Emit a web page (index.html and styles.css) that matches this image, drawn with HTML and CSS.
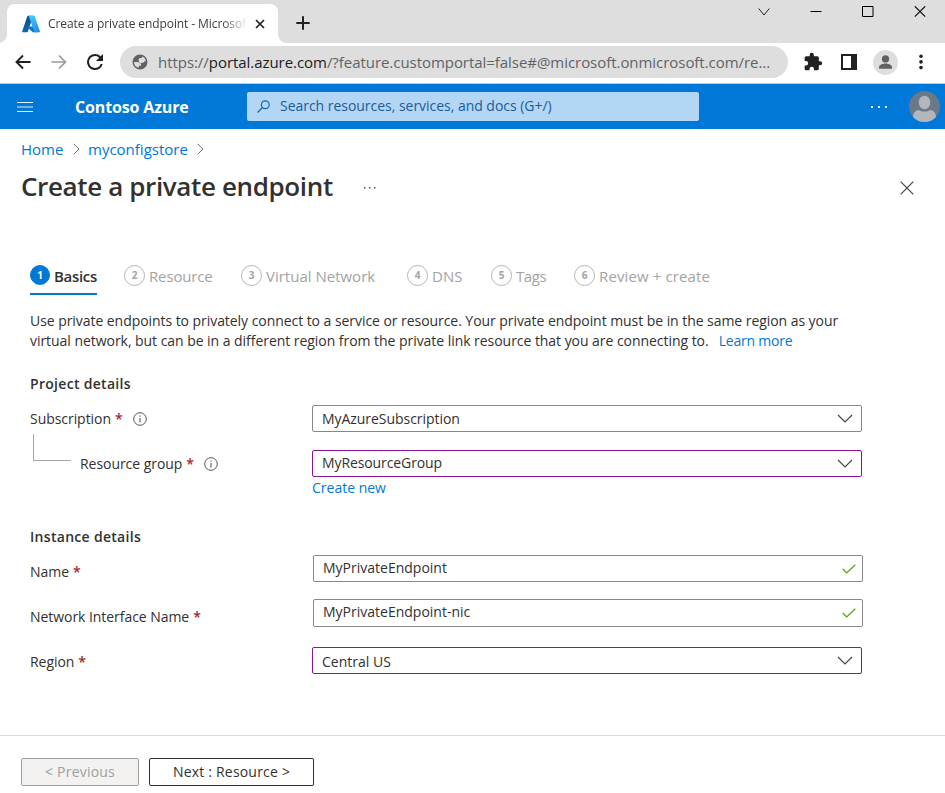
FILE: index.html
```html
<!DOCTYPE html>
<html lang="en">
<head>
<meta charset="utf-8">
<title>Create a private endpoint - Microsoft Azure</title>
<link rel="stylesheet" href="styles.css">
</head>
<body>
<div class="tabstrip">
  <div class="tab">
    <svg class="logo" width="18" height="18" viewBox="0 0 18 18"><defs><linearGradient id="g1" x1="0.7" y1="0" x2="0.3" y2="1"><stop offset="0" stop-color="#114a8b"/><stop offset="1" stop-color="#0669bc"/></linearGradient><linearGradient id="g2" x1="0.3" y1="0" x2="0.7" y2="1"><stop offset="0" stop-color="#3ccbf4"/><stop offset="1" stop-color="#2892df"/></linearGradient></defs><path fill="url(#g1)" d="M6 .8h5.2L5.9 16.6a.9.9 0 0 1-.8.6H1.1a.8.8 0 0 1-.8-1.1L5.200 1.400A.9.9 0 0 1 6 .8z"/><path fill="#0078d4" d="M13.700 11.400H5.500a.4.400 0 0 0-.3.7l5.300 4.900a.8.8 0 0 0 .6.200h4.600z"/><path fill="url(#g2)" d="M12.800 1.400a.8.8 0 0 0-.8-.6H6.100a.8.8 0 0 1 .8.600l5 14.700a.8.8 0 0 1-.8 1.100H17a.8.8 0 0 0 .8-1.100z"/></svg>
    <span class="tab-title">Create a private endpoint - Microsof</span>
    <svg class="tab-close" width="10" height="10" viewBox="0 0 10 10"><path d="M1 1l8 8M9 1L1 9" stroke="#202124" stroke-width="1.700"/></svg>
  </div>
  <svg class="plus" width="14" height="14" viewBox="0 0 14 14"><path d="M7 .3v13.400M.3 7h13.400" stroke="#202124" stroke-width="2"/></svg>
  <div class="window-buttons">
    <svg width="12" height="12" viewBox="0 0 12 12"><path d="M.7 2.500L6 9l5.300-6.500" fill="none" stroke="#222"/></svg>
    <svg width="12" height="12" viewBox="0 0 12 12"><path d="M.5 5.500h11" stroke="#000"/></svg>
    <svg width="12" height="12" viewBox="0 0 12 12"><path d="M.5 .5h10.500V10.500H.5z" fill="none" stroke="#000"/></svg>
    <svg width="12" height="12" viewBox="0 0 12 12"><path d="M.8.3l10.400 10.400M11.200.3L.8 10.700" stroke="#000" stroke-width="1.100"/></svg>
  </div>
</div>
<div class="toolbar">
  <svg class="back" width="16" height="16" viewBox="0 0 16 16"><path d="M15.500 8H2M8 1.500L1.500 8 8 14.500" fill="none" stroke="#202124" stroke-width="1.900"/></svg>
  <svg class="forward" width="16" height="16" viewBox="0 0 16 16"><path d="M.5 8H14M8 1.500L14.500 8 8 14.500" fill="none" stroke="#9b9b9b" stroke-width="1.700"/></svg>
  <svg class="reload" width="24" height="24" viewBox="0 0 24 24"><path fill="#202124" d="M17.650 6.350A7.950 7.950 0 0 0 12 4a8 8 0 1 0 7.730 10h-2.080A6 6 0 1 1 12 6c1.660 0 3.140.690 4.220 1.780L13 11h7V4z"/></svg>
  <div class="omnibox">
    <svg width="18" height="18" viewBox="0 0 24 24"><path fill="#5f6368" d="M12 2a10 10 0 1 0 0 20 10 10 0 0 0 0-20zM4 12h4.500c3.400 0 5.100 1.700 5 5h-3.100v2.800A8 8 0 0 1 4 12zm15.900-.9h-2.100c-.4 1.500-1.600 2.300-3.400 2.300h-4.100V9.600c0-1.600.5-2.500 1.600-2.800h2.700V4.600a8 8 0 0 1 5.300 6.500z"/></svg>
    <span class="url">https://<b>portal.azure.com</b>/?feature.customportal=false#@microsoft.onmicrosoft.com/re...</span>
  </div>
  <svg class="puzzle" width="20" height="20" viewBox="0 0 24 24"><path fill="#202124" d="M20.500 11H19V7a2 2 0 0 0-2-2h-4V3.500a2.500 2.500 0 0 0-5 0V5H4a2 2 0 0 0-2 2v3.800h1.500a2.700 2.700 0 0 1 0 5.400H2V20c0 1.100.9 2 2 2h3.800v-1.500a2.700 2.700 0 0 1 5.400 0V22H17a2 2 0 0 0 2-2v-4h1.500a2.500 2.500 0 0 0 0-5z"/></svg>
  <svg class="panel" width="16" height="16" viewBox="0 0 16 16"><path fill="#202124" d="M0 0h16v16H0zM2 2v12h8V2z" fill-rule="evenodd"/></svg>
  <svg class="person" width="25" height="25" viewBox="0 0 25 25"><circle cx="12.500" cy="12.500" r="12.500" fill="#dedede"/><circle cx="12.500" cy="8.900" r="3.600" fill="#616161"/><path d="M6 18.700v-1.500c0-2.600 4.300-3.700 6.500-3.700s6.500 1.100 6.500 3.700v1.500z" fill="#616161"/></svg>
  <svg class="kebab" width="4" height="16" viewBox="0 0 4 16"><g fill="#202124"><circle cx="2" cy="2.200" r="1.800"/><circle cx="2" cy="7.900" r="1.800"/><circle cx="2" cy="13.600" r="1.800"/></g></svg>
</div>
<header class="portal-bar">
  <svg class="burger" width="16" height="12" viewBox="0 0 16 12"><path d="M0 1.500h16M0 10.500h16" stroke="#e6f2fb"/><path d="M0 6h16" stroke="#6fb2e8" stroke-width="2"/></svg>
  <span class="brand">Contoso Azure</span>
  <div class="search">
    <svg width="13" height="13" viewBox="0 0 13 13"><circle cx="8.300" cy="4.700" r="3.900" fill="none" stroke="#1a64ad" stroke-width="1.200"/><path d="M5.500 7.500L.5 12.500" stroke="#1a64ad" stroke-width="1.200"/></svg>
    <span class="search-text">Search resources, services, and docs (G+/)</span>
  </div>
  <svg class="bar-dots" width="16" height="2" viewBox="0 0 16 2"><path d="M0 0h2v2H0zM7 0h2v2H7zM14 0h2v2h-2z" fill="#fff"/></svg>
  <svg class="avatar" width="31" height="31" viewBox="0 0 31 31"><defs><clipPath id="av"><circle cx="15.500" cy="15.500" r="15.500"/></clipPath></defs><g clip-path="url(#av)"><path fill="#6b7887" d="M0 0h31v31H0z"/><path fill="#b2b7bb" d="M4 31v-5c0-4 2.500-7 6-7 1.500 1 3 1.500 5.500 1.500s4-.5 5.500-1.500c3.500 0 6 3 6 7v5z"/><ellipse cx="15.500" cy="11.500" rx="6.300" ry="7.200" fill="#b2b7bb" stroke="#6b7887"/></g></svg>
</header>
<main>
  <nav class="crumbs"><a class="c-home">Home</a><svg width="7" height="12" viewBox="0 0 7 12"><path d="M.8.800L6 6 .8 11.200" fill="none" stroke="#777"/></svg><a class="c-store">myconfigstore</a><svg width="7" height="12" viewBox="0 0 7 12"><path d="M.8.800L6 6 .8 11.200" fill="none" stroke="#777"/></svg></nav>
  <div class="title-row">
    <h1>Create a private endpoint</h1>
    <svg class="more" width="12" height="2" viewBox="0 0 12 2"><path d="M0 0h1.500v1.500H0zM5 0h1.500v1.500H5zM10 0h1.500v1.500H10z" fill="#555"/></svg>
    <svg class="close" width="14" height="14" viewBox="0 0 14 14"><path d="M.7.700l12.600 12.600M13.300.700L.7 13.300" stroke="#444" stroke-width="1.200"/></svg>
  </div>
  <div class="steps">
    <div class="step active"><i>1</i><span class="s1">Basics</span></div>
    <div class="step"><i>2</i><span class="s2">Resource</span></div>
    <div class="step"><i>3</i><span class="s3">Virtual Network</span></div>
    <div class="step"><i>4</i><span class="s4">DNS</span></div>
    <div class="step"><i>5</i><span class="s5">Tags</span></div>
    <div class="step"><i>6</i><span class="s6">Review + create</span></div>
  </div>
  <p class="intro"><span class="line1">Use private endpoints to privately connect to a service or resource. Your private endpoint must be in the same region as your</span><br><span class="line2">virtual network, but can be in a different region from the private link resource that you are connecting to.</span><a class="learn">Learn more</a></p>
  <h2 class="h-project">Project details</h2>
  <div class="row r-sub">
    <label><span class="l-sub">Subscription</span><em>*</em><svg class="info" width="14" height="14" viewBox="0 0 14 14"><circle cx="7" cy="7" r="6.300" fill="none" stroke="#555" stroke-width="1"/><path d="M7 6v4.500M7 3.500v1.300" stroke="#555" stroke-width="1.100"/></svg></label>
    <div class="field"><span class="v-sub">MyAzureSubscription</span><svg width="16" height="9" viewBox="0 0 16 9"><path d="M1 1l7 7 7-7" fill="none" stroke="#444" stroke-width="1.200"/></svg></div>
  </div>
  <div class="row r-group">
    <label><span class="elbow"></span><span class="l-group">Resource group</span><em>*</em><svg class="info" width="14" height="14" viewBox="0 0 14 14"><circle cx="7" cy="7" r="6.300" fill="none" stroke="#555" stroke-width="1"/><path d="M7 6v4.500M7 3.500v1.300" stroke="#555" stroke-width="1.100"/></svg></label>
    <div class="field changed"><span class="v-group">MyResourceGroup</span><svg width="16" height="9" viewBox="0 0 16 9"><path d="M1 1l7 7 7-7" fill="none" stroke="#444" stroke-width="1.200"/></svg></div>
  </div>
  <a class="create">Create new</a>
  <h2 class="h-instance">Instance details</h2>
  <div class="row r-name">
    <label><span class="l-name">Name</span><em>*</em></label>
    <div class="field input"><span class="v-name">MyPrivateEndpoint</span><svg width="14" height="10" viewBox="0 0 14 10"><path d="M.7 5l4 4L13.300.7" fill="none" stroke="#57a300" stroke-width="1.200"/></svg></div>
  </div>
  <div class="row r-nic">
    <label><span class="l-nic">Network Interface Name</span><em>*</em></label>
    <div class="field input"><span class="v-nic">MyPrivateEndpoint-nic</span><svg width="14" height="10" viewBox="0 0 14 10"><path d="M.7 5l4 4L13.300.7" fill="none" stroke="#57a300" stroke-width="1.200"/></svg></div>
  </div>
  <div class="row r-region">
    <label><span class="l-region">Region</span><em>*</em></label>
    <div class="field changed"><span class="v-region">Central US</span><svg width="16" height="9" viewBox="0 0 16 9"><path d="M1 1l7 7 7-7" fill="none" stroke="#444" stroke-width="1.200"/></svg></div>
  </div>
</main>
<footer>
  <button class="prev" disabled><span>&lt; Previous</span></button>
  <button class="next"><span>Next : Resource &gt;</span></button>
</footer>
</body>
</html>
```
FILE: styles.css
```css
* { box-sizing: border-box; }
html, body { margin: 0; height: 100%; }
body {
  display: flex; flex-direction: column; overflow: hidden; background: #fff;
  font-family: "Open Sans", "Noto Sans", sans-serif; font-size: 14px; color: #323130;
}
svg { display: block; flex: none; }
span, a, h1, h2 { white-space: nowrap; }
a { color: #0078d4; }

.tabstrip { height: 43px; flex: none; background: #dedede; display: flex; align-items: flex-start; }
.tab {
  position: relative; margin: 4px 0 0 7px; width: 271px; height: 39px; background: #fff;
  border-radius: 8px 8px 0 0; display: flex; align-items: center; padding-left: 15px;
}
.tab::before, .tab::after { content: ""; position: absolute; bottom: 0; width: 8px; height: 8px; }
.tab::before { left: -8px; background: radial-gradient(circle at 0 0, transparent 7.5px, #fff 8px); }
.tab::after { right: -8px; background: radial-gradient(circle at 100% 0, transparent 7.5px, #fff 8px); }
.tab-title {
  margin-left: 8px; width: 198px; font-size: 12px; letter-spacing: -0.09px; color: #3c3c3c;
  -webkit-mask-image: linear-gradient(90deg, #000 174px, transparent 200px);
  mask-image: linear-gradient(90deg, #000 174px, transparent 200px);
}
.tab-close { margin-left: 9px; }
.plus { margin: 16px 0 0 18px; }
.window-buttons { margin: 6px 19px 0 auto; display: flex; gap: 40px; }

.toolbar { height: 41px; flex: none; display: flex; align-items: center; padding: 0 20px 2px 15px; border-bottom: 1px solid #c4ccd3; }
.forward { margin-left: 20px; }
.reload { margin-left: 16px; width: 24px; }
.omnibox { margin-left: 13px; width: 668px; height: 32px; border-radius: 16px; background: #dedede; display: flex; align-items: center; padding-left: 11px; }
.url { margin-left: 9px; font-size: 15px; letter-spacing: -0.048px; color: #5f6368; }
.url b { font-weight: 400; color: #202124; }
.puzzle { margin-left: 15px; }
.panel { margin-left: 18px; }
.person { margin-left: 16px; }
.kebab { margin-left: 21px; }

.portal-bar { height: 45px; flex: none; background: #0078d7; display: flex; align-items: center; padding-left: 17px; }
.brand { margin-left: 42px; width: 172px; font-size: 16px; letter-spacing: -0.15px; font-weight: 700; color: #fff; }
.search { width: 452px; height: 29px; border-radius: 2px; background: #b2d6f3; display: flex; align-items: center; padding-left: 10px; }
.search-text { margin-left: 10px; padding-bottom: 2px; letter-spacing: -0.03px; color: #1a5c9c; }
.bar-dots { margin-left: 172px; }
.avatar { margin-left: 22px; }

main { height: 606px; flex: none; }
.crumbs { height: 20px; margin: 10px 0 0 21px; display: flex; align-items: center; font-size: 15px; }
.c-home { width: 52px; }
.c-store { width: 109px; margin-left: 8px; }
.title-row { height: 36px; margin-top: 9px; padding: 0 31px 0 21px; display: flex; align-items: center; }
h1 { margin: 0; width: 343px; font-size: 26px; line-height: 36px; letter-spacing: -0.37px; font-weight: 600; }
.more { margin-top: 4px; }
.close { margin: 4px 0 0 auto; }

.steps { margin: 60px 0 0 30px; display: flex; height: 34px; }
.step { display: flex; height: 31px; padding-bottom: 9px; align-items: center; color: #a3a3a3; font-size: 15px; }
.step span { padding-top: 2px; }
.step i {
  width: 21px; height: 21px; flex: none; border: 1px solid #b5b5b5; border-radius: 50%; margin-right: 4px;
  font-size: 10px; line-height: 18px; text-align: center; font-style: normal; font-weight: 700;
}
.step.active { width: 67px; margin-right: 27px; color: #323130; font-weight: 600; border-bottom: 2px solid #0078d4; padding-bottom: 7px; }
.active i { width: 20px; height: 20px; margin-right: 4px; background: #0078d4; border-color: #0078d4; color: #fff; }
.s1 { letter-spacing: -0.3px; }
.s2 { width: 92px; letter-spacing: -0.15px; }
.s3 { width: 141px; }
.s4 { width: 59px; }
.s5 { width: 58px; letter-spacing: -0.4px; }
.s6 { letter-spacing: 0.12px; }

.intro { margin: 13px 0 0 30px; line-height: 20px; letter-spacing: -0.055px; }
.line2 { letter-spacing: -0.045px; }
.learn { margin-left: 10px; letter-spacing: -0.2px; }
h2 { margin: 0 0 0 30px; font-size: 14px; line-height: 20px; font-weight: 600; letter-spacing: 0.3px; }
.h-project { margin-top: 23px; }
.row { display: flex; height: 27px; margin-left: 30px; }
label { width: 282px; flex: none; display: flex; align-items: center; letter-spacing: -0.05px; }
label em { margin-left: 4px; color: #a4262c; font-style: normal; font-size: 14px; font-weight: 600; }
.info { margin-left: 10px; }
.field { width: 550px; height: 27px; border: 1px solid #8a8886; border-radius: 2px; display: flex; align-items: center; justify-content: space-between; padding: 0 8px 0 9px; }
.field.changed { border-color: #881798; }
.field.input { margin-left: 1px; padding-right: 6px; }
.field.input span { padding-bottom: 3px; }
.r-sub { margin-top: 11px; }
.r-group { margin-top: 18px; }
.v-group { padding-bottom: 2px; letter-spacing: -0.1px; }
.v-sub { letter-spacing: -0.05px; }
.elbow { width: 38px; height: 27px; margin: -32px 9px 0 3px; border-left: 1px solid #a6a6a6; border-bottom: 1px solid #a6a6a6; }
.create { display: block; margin: 1px 0 0 312px; line-height: 20px; width: max-content; }
.h-instance { margin-top: 29px; }
.r-name { margin-top: 8px; }
.r-nic { margin-top: 17px; height: 28px; }
.r-nic .field { height: 28px; }
.field .v-nic { padding-bottom: 1px; }
.r-region { margin-top: 20px; }
.r-region label, .v-region { padding-top: 2px; }
.r-name label { padding-top: 6px; }
.r-nic label { padding-top: 6px; }

footer { flex: 1; border-top: 1px solid #dcdcdc; display: flex; align-items: flex-start; gap: 10px; padding: 22px 0 0 21px; }
button { height: 28px; padding: 0 0 2px; font: inherit; letter-spacing: 0.2px; background: #fff; border: 1px solid #323130; border-radius: 2px; color: #323130; font-weight: 500; }
.prev { width: 118px; background: #f3f2f1; border-color: #a19f9d; color: #a19f9d; }
.next { width: 165px; }
```
